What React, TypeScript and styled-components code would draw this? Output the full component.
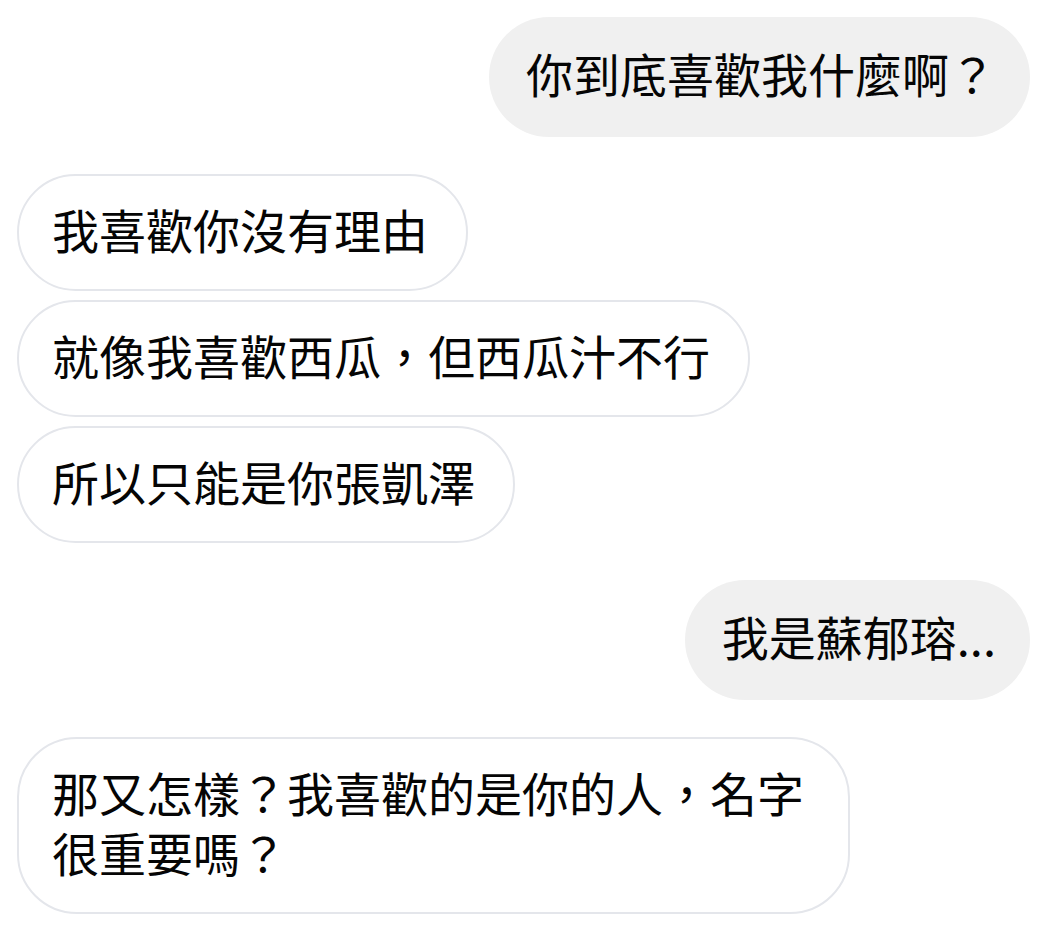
import React from 'react';
import styled, {createGlobalStyle} from 'styled-components';

type MessageType = {
    id: number
    text: string
    mine: boolean
}

type GroupType = {
    id: number
    mine: boolean
    messages: MessageType[]
}

const groups: GroupType[] = [
    {id: 1, mine: true, messages: [{id: 1, text: '你到底喜歡我什麼啊？', mine: true}]},
    {
        id: 2, mine: false, messages: [
            {id: 2, text: '我喜歡你沒有理由', mine: false},
            {id: 3, text: '就像我喜歡西瓜，但西瓜汁不行', mine: false},
            {id: 4, text: '所以只能是你張凱澤', mine: false},
        ]
    },
    {id: 3, mine: true, messages: [{id: 5, text: '我是蘇郁瑢...', mine: true}]},
    {id: 4, mine: false, messages: [{id: 6, text: '那又怎樣？我喜歡的是你的人，名字很重要嗎？', mine: false}]},
]

const App = () => {
    return (
        <>
            <GlobalStyle/>
            <Thread>
                {groups.map(g => (
                    <Group key={g.id} mine={g.mine}>
                        {g.messages.map(m => (
                            <Bubble key={m.id} mine={m.mine}>{m.text}</Bubble>
                        ))}
                    </Group>
                ))}
            </Thread>
        </>
    );
};

export default App;

const GlobalStyle = createGlobalStyle`
  html, body {
    margin: 0;
    padding: 0;
    background: #ffffff;
  }
  body {
    font-family: "Noto Sans CJK TC", "Noto Sans", sans-serif;
    color: #050505;
  }
`

const Thread = styled.div`
  display: flex;
  flex-direction: column;
  gap: 37px;
  padding: 17px 23px 20px 17px;
  width: 1053px;
  box-sizing: border-box;
`

const Group = styled.div<{ mine: boolean }>`
  display: flex;
  flex-direction: column;
  align-items: ${props => props.mine ? 'flex-end' : 'flex-start'};
  gap: 9px;
`

// text sits a bit higher than centre in the screenshot, so top padding is smaller
const Bubble = styled.div<{ mine: boolean }>`
  box-sizing: border-box;
  max-width: 833px;
  font-size: 47px;
  line-height: 60px;
  border-radius: 60px;
  word-break: break-all;
  background-color: ${props => props.mine ? '#f0f0f0' : '#ffffff'};
  border: ${props => props.mine ? 'none' : '2px solid #e4e6eb'};
  padding: ${props => props.mine ? '26px 34px 34px 37px' : '23px 38px 30px 33px'};
`
